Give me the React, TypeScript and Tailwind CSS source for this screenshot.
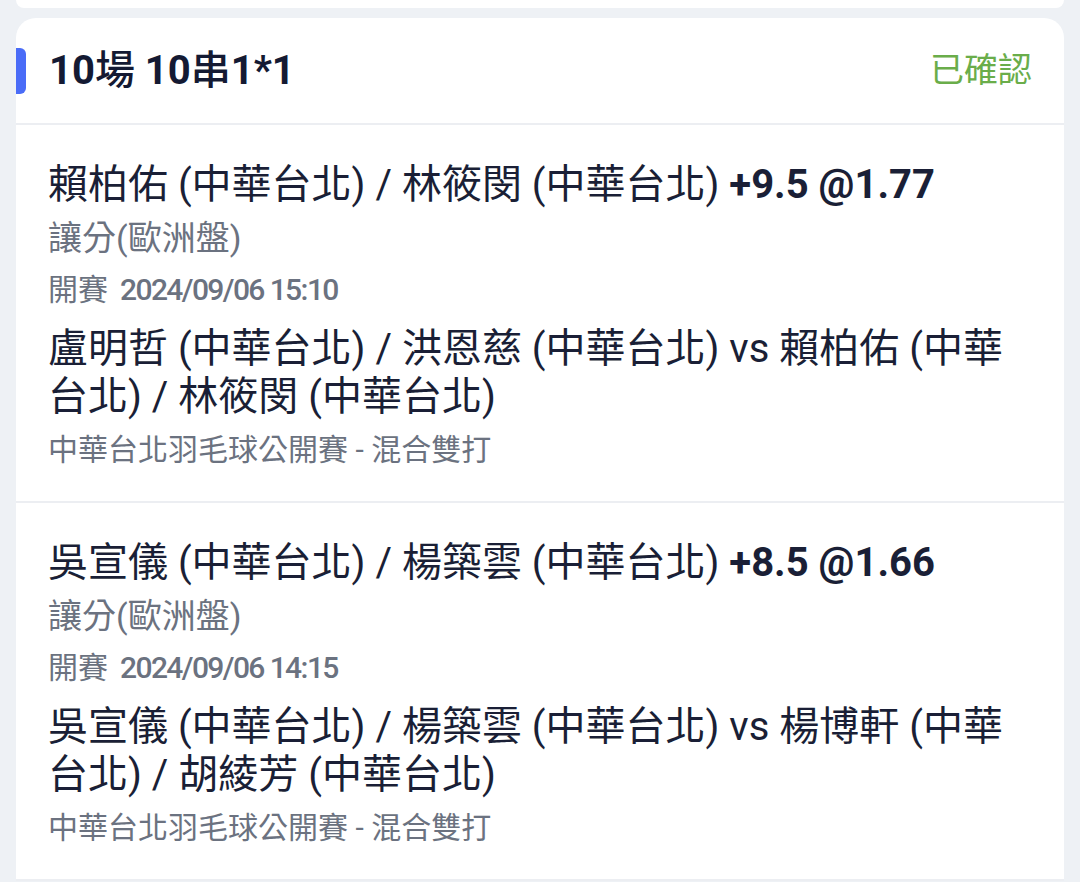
const items = [
  {
    pick: "賴柏佑 (中華台北) / 林筱閔 (中華台北)",
    line: "+9.5 @1.77",
    market: "讓分(歐洲盤)",
    time: "2024/09/06 15:10",
    match: "盧明哲 (中華台北) / 洪恩慈 (中華台北) vs 賴柏佑 (中華台北) / 林筱閔 (中華台北)",
    league: "中華台北羽毛球公開賽 - 混合雙打",
  },
  {
    pick: "吳宣儀 (中華台北) / 楊築雲 (中華台北)",
    line: "+8.5 @1.66",
    market: "讓分(歐洲盤)",
    time: "2024/09/06 14:15",
    match: "吳宣儀 (中華台北) / 楊築雲 (中華台北) vs 楊博軒 (中華台北) / 胡綾芳 (中華台北)",
    league: "中華台北羽毛球公開賽 - 混合雙打",
  },
];

export default function App() {
  return (
    <div
      className="min-h-[882px] bg-[#eef1f5] px-4 overflow-hidden"
      style={{ fontFamily: "Roboto, 'Noto Sans CJK TC', sans-serif" }}
    >
      {/* previous card edge */}
      <div className="h-[8px] bg-white rounded-b-[20px]" />

      <div className="mt-[10px] bg-white rounded-t-[20px] w-[1048px]">
        {/* header */}
        <div className="relative flex items-center justify-between h-[107px] pl-[33px] pr-[32px] border-b-2 border-[#eceef2]">
          <div className="absolute left-0 top-[30px] w-[10px] h-[46px] bg-[#4a6cf7] rounded-r-[6px]" />
          <span className="text-[40px] font-bold text-[#141a33]">
            10<span className="font-medium">場</span> 10<span className="font-medium">串</span>1*1
          </span>
          <span className="text-[34px] text-[#6aad4a]">已確認</span>
        </div>

        {items.map((it, i) => (
          <div key={i} className="pl-[32px] pr-[32px] pt-[36px] pb-[27px] border-b-2 border-[#eceef2]">
            <div className="text-[40px] leading-[48px] text-[#1a1f36]">
              {it.pick} <span className="font-bold">{it.line}</span>
            </div>
            <div className="mt-[3px] text-[34px] leading-[52px] text-[#6b7280]">{it.market}</div>
            <div className="text-[30px] leading-[52px] text-[#6b7280] flex gap-[12px]">
              <span>開賽</span>
              <span className="font-medium tracking-[-1.6px]">{it.time}</span>
            </div>
            <div className="mt-[9px] text-[40px] leading-[48px] text-[#1a1f36]">{it.match}</div>
            <div className="mt-[5px] text-[30px] leading-[48px] text-[#6b7280]">{it.league}</div>
          </div>
        ))}
      </div>
    </div>
  );
}
